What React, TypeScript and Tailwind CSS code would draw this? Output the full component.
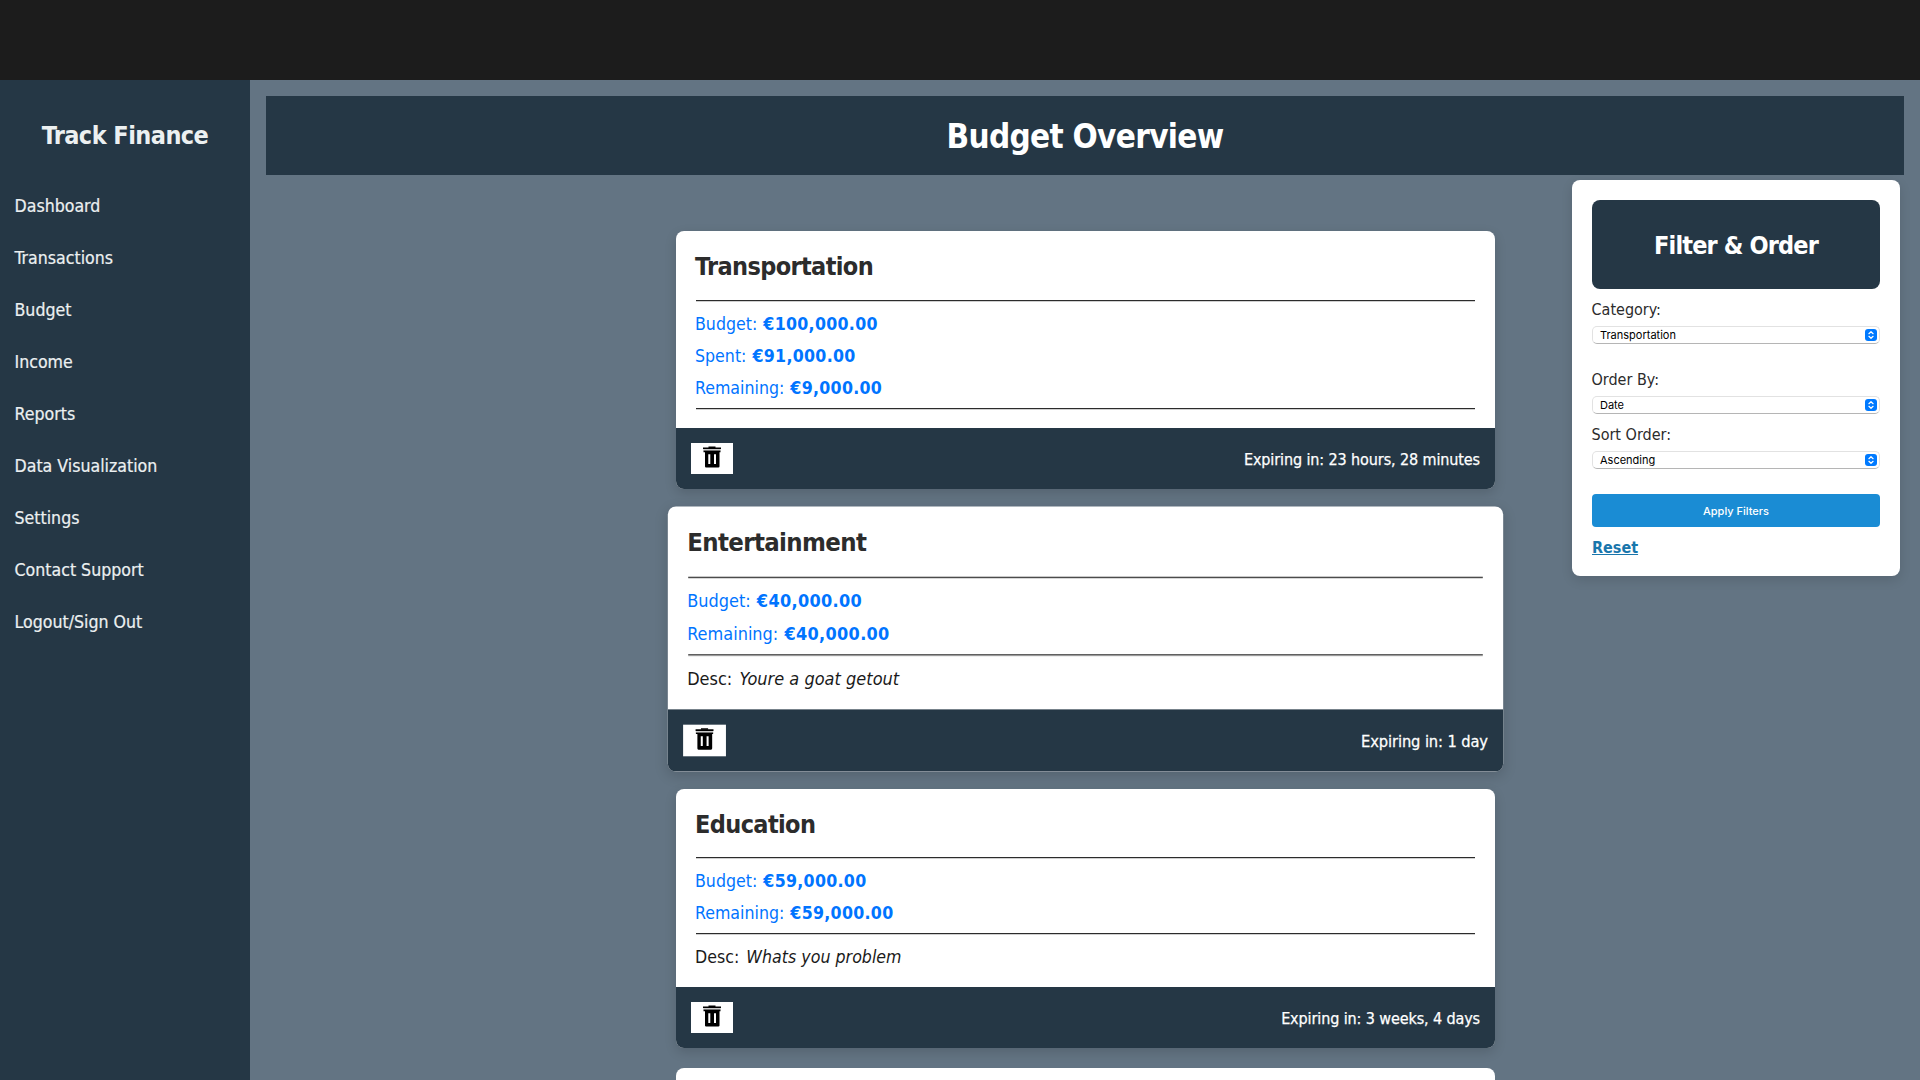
type Row = { label: string; amount: string };
type Budget = {
  name: string;
  rows: Row[];
  desc?: string;
  expires: string;
  headHeight: string;
  raised?: boolean;
};

const navItems = [
  "Dashboard",
  "Transactions",
  "Budget",
  "Income",
  "Reports",
  "Data Visualization",
  "Settings",
  "Contact Support",
  "Logout/Sign Out",
];

const budgets: Budget[] = [
  {
    name: "Transportation",
    rows: [
      { label: "Budget:", amount: "€100,000.00" },
      { label: "Spent:", amount: "€91,000.00" },
      { label: "Remaining:", amount: "€9,000.00" },
    ],
    expires: "23 hours, 28 minutes",
    headHeight: "h-[49px]",
  },
  {
    name: "Entertainment",
    rows: [
      { label: "Budget:", amount: "€40,000.00" },
      { label: "Remaining:", amount: "€40,000.00" },
    ],
    desc: "Youre a goat getout",
    expires: "1 day",
    headHeight: "h-[49px]",
    raised: true,
  },
  {
    name: "Education",
    rows: [
      { label: "Budget:", amount: "€59,000.00" },
      { label: "Remaining:", amount: "€59,000.00" },
    ],
    desc: "Whats you problem",
    expires: "3 weeks, 4 days",
    headHeight: "h-[48px]",
  },
];

function TrashIcon() {
  return (
    <svg width="18" height="22" viewBox="0 0 18 22" className="block">
      <path d="M5.5 0.5h7v1.5h-7z" fill="#000" />
      <path d="M0 1.6h18v1.5H0z" fill="#000" />
      <path d="M0.3 3.1h17.4v1.5H0.3z" fill="#c9c9c9" />
      <path d="M0.5 4.6h17v1.6h-17z" fill="#000" />
      <path
        fillRule="evenodd"
        d="M2 6h14.5v14.2a1.2 1.2 0 0 1-1.2 1.3H3.3A1.2 1.2 0 0 1 2 20.200zM5.300 8.300v9.700h2v-9.700zM11 8.300v9.700h2v-9.700z"
        fill="#000"
      />
    </svg>
  );
}

function Rule() {
  return <div className="h-[2px] border-t border-t-[#2c2c2c] bg-[#cfcfcf]" />;
}

function BudgetCard({ budget }: { budget: Budget }) {
  return (
    <article
      className={
        "overflow-hidden rounded-lg bg-white shadow-[0_4px_12px_rgba(0,0,0,0.15)]" +
        (budget.raised ? " scale-[1.02]" : "")
      }
    >
      <div className="px-5 pt-5">
        <h2
          className={
            "-ml-px text-[25px] leading-8 font-bold tracking-[-0.62px] text-[#2c2c2c] " +
            budget.headHeight
          }
        >
          {budget.name}
        </h2>
        <Rule />
        <div className="-ml-px flex flex-col gap-2.5 py-2.5">
          {budget.rows.map((row) => (
            <p key={row.label} className="h-[22px] text-[17.6px] leading-6 text-[#0074ff]">
              {row.label} <b className="ml-px tracking-[0.3px]">{row.amount}</b>
            </p>
          ))}
        </div>
        <Rule />
        {budget.desc ? (
          <p className="mt-2.5 mb-5 -ml-px h-[22px] text-[17.6px] leading-6 text-[#1a1a1a]">
            Desc: <i className="ml-0.5 tracking-[0.03px]">{budget.desc}</i>
          </p>
        ) : (
          <div className="h-[18px]" />
        )}
      </div>
      <footer className="flex items-center justify-between bg-[#253745] p-[15px]">
        <button className="flex h-[31px] w-[42px] justify-center bg-white pt-[3px]">
          <TrashIcon />
        </button>
        <span className="pt-[2px] text-base leading-6 tracking-[-0.11px] text-white [-webkit-text-stroke:0.25px_white]">
          Expiring in: {budget.expires}
        </span>
      </footer>
    </article>
  );
}

function SelectField({ label, value }: { label: string; value: string }) {
  return (
    <div className="flex flex-col">
      <label className="-ml-[0.5px] h-6 text-base leading-[21px] text-[#2c2c2c]">{label}</label>
      <div className="mt-[3px] flex h-[18px] items-center justify-between rounded-[5px] border border-[#e2e2e2] border-b-[#b5b5b5] bg-white pr-0.5 pl-[7px]">
        <span className="font-[Inter,sans-serif] text-[11px] leading-4 text-black">{value}</span>
        <svg width="12" height="12" viewBox="0 0 12 12">
          <rect width="12" height="12" rx="3" fill="#007aff" />
          <path
            d="M3.900 4.700 6 2.700l2.100 2M3.900 7.300 6 9.300l2.100-2"
            fill="none"
            stroke="#fff"
            strokeWidth="1.200"
            strokeLinecap="round"
            strokeLinejoin="round"
          />
        </svg>
      </div>
    </div>
  );
}

export default function App() {
  return (
    <div className="flex h-screen w-full flex-col overflow-hidden bg-[#637483] font-['DejaVu_Sans_Condensed','DejaVu_Sans',sans-serif]">
      <div className="h-20 shrink-0 bg-[#1c1c1c]" />
      <div className="flex min-h-0 flex-1">
        <aside className="w-[250px] shrink-0 bg-[#253745] text-[#ecf0f1]">
          <h2 className="h-[100px] pt-10 text-center text-[25px] leading-8 font-bold tracking-[-0.55px]">
            Track Finance
          </h2>
          <nav className="flex flex-col pl-[14.5px] [-webkit-text-stroke:0.2px_#ecf0f1]">
            {navItems.map((item) => (
              <a key={item} className="h-[52px] text-[17.6px] leading-[52px]">
                {item}
              </a>
            ))}
          </nav>
        </aside>
        <main className="flex-1 px-4 pt-4">
          <header className="flex h-[79px] items-center justify-center bg-[#253745] pt-[3px]">
            <h1 className="text-[33px] leading-10 font-bold tracking-[-0.7px] text-white">
              Budget Overview
            </h1>
          </header>
          <div className="flex items-start">
            <section className="mt-14 ml-[410px] flex w-[819px] shrink-0 flex-col gap-5">
              {budgets.map((b) => (
                <BudgetCard key={b.name} budget={b} />
              ))}
              <article className="h-60 rounded-lg bg-white" />
            </section>
            <aside className="mt-[5px] ml-[77px] h-[396px] w-[328px] shrink-0 rounded-lg bg-white p-5 shadow-[0_4px_12px_rgba(0,0,0,0.12)]">
              <div className="flex h-[89px] items-center justify-center rounded-lg bg-[#253745] pt-0.5">
                <h2 className="text-[25px] leading-8 font-bold tracking-[-0.85px] text-white">
                  Filter & Order
                </h2>
              </div>
              <div className="mt-[10px]">
                <SelectField label="Category:" value="Transportation" />
              </div>
              <div className="mt-[25px]">
                <SelectField label="Order By:" value="Date" />
              </div>
              <div className="mt-[10px]">
                <SelectField label="Sort Order:" value="Ascending" />
              </div>
              <button className="mt-[25px] block h-[33px] w-full rounded bg-[#1a8cd4] pt-px font-[Inter,sans-serif] text-[11px] leading-8 font-medium text-white">
                Apply Filters
              </button>
              <a className="mt-[9px] block text-base leading-6 font-bold text-[#1976ac] underline">
                Reset
              </a>
            </aside>
          </div>
        </main>
      </div>
    </div>
  );
}
